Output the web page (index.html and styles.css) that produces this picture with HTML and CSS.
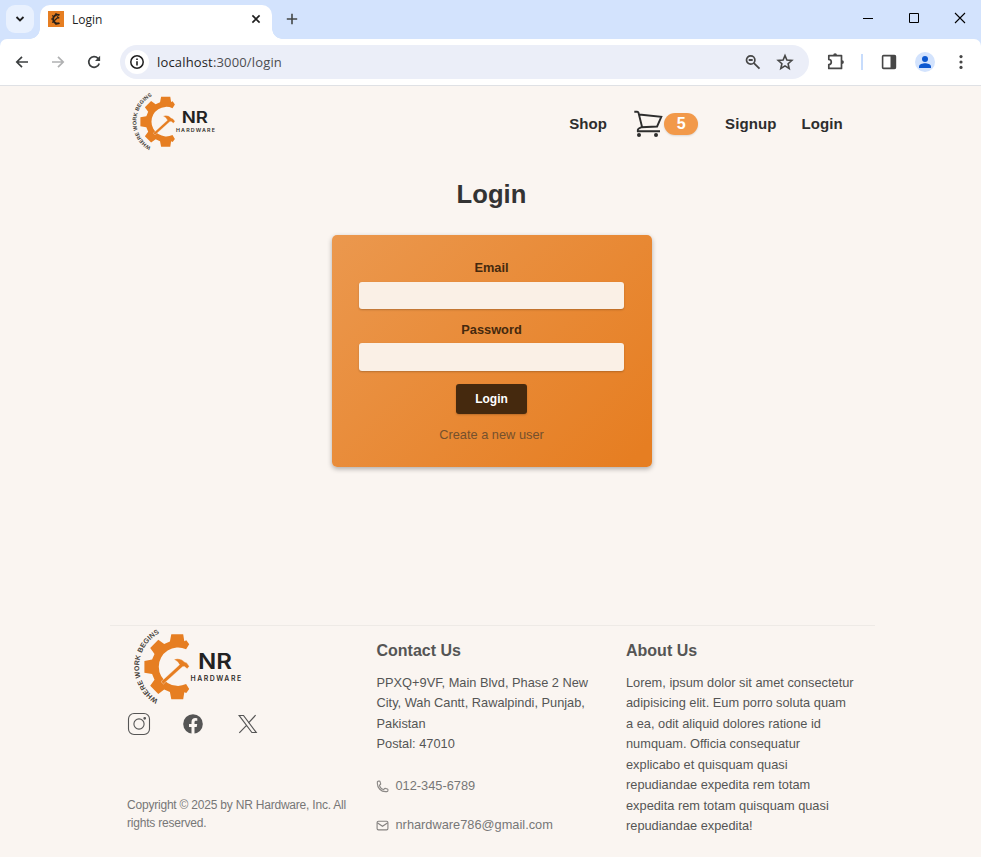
FILE: index.html
```html
<!DOCTYPE html>
<html lang="en">
<head>
<meta charset="utf-8">
<title>Login</title>
<link rel="stylesheet" href="styles.css">
</head>
<body>
<svg width="0" height="0" class="defs" aria-hidden="true">
  <defs>
    <path id="ring" d="M31.2 76.8A38 38 0 0 1 35 9"/>
    <symbol id="logo" viewBox="0 0 120 84">
      <path fill="#e67e22" d="M44.3 11.2h11.9l1.1 7 2-.9 2.900 4-3.100 5A19.200 19.200 0 1 0 59.100 61.100l3.100 5-2.900 3.900-2-.8-1.100 7h-11.900l-1.400-7.200-5.700-2.400-5.900 4.300-8.100-8.200 4.300-6-2.400-5.600-7.700-1.300V38l7.700-1.400 2.400-5.700-4.300-6 8.100-8.100 5.900 4.200 5.700-2.400z"/>
      <path fill="#e67e22" d="M34 58.700 52.500 41.800q-1.800-3.800-5.600-5.600 6.800-1.700 10.400 2.600l2.400 1 2.600 3.500-2.100 2.500-2.800-2.300-1.900.3-19.100 17.200z" stroke="#faf5f1" stroke-width=".4"/>
      <text class="ring-text"><textPath href="#ring" textLength="81" lengthAdjust="spacing">WHERE WORK BEGINS</textPath></text>
      <text class="mark" x="71" y="46" textLength="34" lengthAdjust="spacingAndGlyphs">NR</text>
      <text class="word" x="63.600" y="57.700" textLength="50.500" lengthAdjust="spacing">HARDWARE</text>
    </symbol>
  </defs>
</svg>

<div class="chrome">
<div class="tabstrip">
  <div class="tab-search"><svg width="28" height="28" viewBox="0 0 28 28"><path d="M10.500 12l3.500 3.500 3.500-3.500" fill="none" stroke="#1f1f1f" stroke-width="1.800"/></svg></div>
  <div class="tab">
    <svg class="favicon" width="16" height="16" viewBox="0 0 16 16"><path fill="#e67e22" d="M0 0h16v16H0z"/><path d="M11.500 4.200A4.400 4.400 0 1 0 11.500 12" fill="none" stroke="#2b2118" stroke-width="1.900"/><path d="M8 2v2M3 8h2M8 12v2M4.300 4.300l1 1M4.300 11.700l1-1M6 10l4-3.800M9 5.500l2.300 1.700" stroke="#2b2118" stroke-width="1.200"/></svg>
    <span class="tab-title">Login</span>
    <svg class="tab-close" width="16" height="16" viewBox="0 0 16 16"><path d="M4.400 4.400l7.200 7.200M11.600 4.400l-7.200 7.200" stroke="#1f1f1f" stroke-width="1.600"/></svg>
  </div>
  <svg class="new-tab" width="16" height="16" viewBox="0 0 16 16"><path d="M8 2.800v10.400M2.800 8h10.400" stroke="#444746" stroke-width="1.600"/></svg>
  <div class="window-controls">
    <svg width="46" height="36" viewBox="0 0 46 36"><path d="M18 18.500h10" stroke="#000"/></svg>
    <svg width="46" height="36" viewBox="0 0 46 36"><path d="M18.500 13.500h9v9h-9z" fill="none" stroke="#000"/></svg>
    <svg width="46" height="36" viewBox="0 0 46 36"><path d="M18 13l10 10M28 13L18 23" stroke="#000" stroke-width="1.100"/></svg>
  </div>
</div>

<div class="toolbar">
  <svg class="back" width="16" height="16" viewBox="0 0 16 16"><path d="M14 8H3M8 2.800L2.800 8 8 13.200" fill="none" stroke="#3c3f40" stroke-width="1.700"/></svg>
  <svg class="forward" width="16" height="16" viewBox="0 0 16 16"><path d="M2 8h11M8 2.800L13.200 8 8 13.200" fill="none" stroke="#b0b1b2" stroke-width="1.700"/></svg>
  <svg class="reload" width="16" height="16" viewBox="0 0 16 16"><path d="M13.200 9.400A5.300 5.300 0 1 1 12 4.400l1.300 1.500" fill="none" stroke="#3c3f40" stroke-width="1.700"/><path d="M14.100 1.800v5.100H9z" fill="#3c3f40"/></svg>
  <div class="omnibox">
    <span class="info"><svg width="16" height="16" viewBox="0 0 16 16"><circle cx="8" cy="8" r="6.200" fill="none" stroke="#1f1f1f" stroke-width="1.500"/><path d="M8 7.200v4.200M8 4.500v1.600" stroke="#1f1f1f" stroke-width="1.600"/></svg></span>
    <span class="url"><b>localhost</b>:3000/login</span>
    <svg class="zoom" width="18" height="18" viewBox="0 0 18 18"><circle cx="6.700" cy="7" r="4.200" fill="none" stroke="#474747" stroke-width="1.700"/><path d="M4.700 7h4M9.900 10.200l5.600 5.500" stroke="#474747" stroke-width="1.800"/></svg>
    <svg class="star" width="18" height="18" viewBox="0 0 18 18"><path d="M9 2.600l1.900 4.500 4.900.4-3.700 3.200 1.100 4.800L9 12.900l-4.200 2.600 1.100-4.800-3.700-3.200 4.900-.4z" fill="none" stroke="#474747" stroke-width="1.600"/></svg>
  </div>
  <svg class="ext" width="18" height="18" viewBox="0 0 18 18"><path d="M1.800 2.600h12.700v12.800H1.800v-3.900a2.500 2.500 0 0 0 0-5z" fill="none" stroke="#474747" stroke-width="1.700" stroke-linejoin="round"/><path d="M6.200 2.200a1.900 1.900 0 0 1 3.800 0zM15 7.200a1.900 1.900 0 0 1 0 3.800z" fill="#474747"/></svg>
  <i class="divider"></i>
  <svg class="panel" width="16" height="16" viewBox="0 0 16 16"><rect x="1.600" y="1.600" width="12.800" height="12.800" rx="1" fill="none" stroke="#474747" stroke-width="1.600"/><path d="M9.500 1.500h5v13h-5z" fill="#474747"/></svg>
  <svg class="profile" width="20" height="20" viewBox="0 0 20 20"><circle cx="10" cy="10" r="10" fill="#d3e3fd"/><circle cx="10" cy="7" r="3" fill="#0b57d0"/><path d="M4 16v-1.600c0-2.200 3.600-3.200 6-3.200s6 1 6 3.200V16z" fill="#0b57d0"/></svg>
  <svg class="more" width="16" height="16" viewBox="0 0 16 16"><g fill="#474747"><circle cx="8" cy="2.600" r="1.600"/><circle cx="8" cy="8" r="1.600"/><circle cx="8" cy="13.400" r="1.600"/></g></svg>
</div>
</div>

<div class="page">
  <header class="header">
    <svg class="logo-small"><use href="#logo"/></svg>
    <nav class="nav">
      <a class="shop">Shop</a>
      <a class="cart">
        <svg width="30" height="28" viewBox="0 0 30 28"><path d="M.3 1.800h2.900q1 0 1.300 1L8 16.800M5.100 4.500l22.200 2.400-4.200 9.600L7.300 17.200l-2.800 1.600q-1 .8-.7 2.400H26" fill="none" stroke="#2d2d2d" stroke-width="1.900"/><circle cx="5" cy="24.900" r="2" fill="#2d2d2d"/><circle cx="22" cy="24.900" r="2" fill="#2d2d2d"/></svg>
        <span class="badge">5</span>
      </a>
      <a class="signup">Signup</a>
      <a class="login-link">Login</a>
    </nav>
  </header>

  <main class="main">
    <h1>Login</h1>
    <form class="card">
      <label for="email">Email</label>
      <input id="email" type="email">
      <label for="password" class="second">Password</label>
      <input id="password" type="password">
      <button type="button">Login</button>
      <a class="create">Create a new user</a>
    </form>
  </main>

  <footer class="footer">
    <div class="brand">
      <svg class="logo-large"><use href="#logo"/></svg>
      <div class="social">
        <svg width="24" height="24" viewBox="0 0 24 24" fill="none" stroke="#555" stroke-width="1.100"><rect x="1.500" y="1.500" width="21" height="21" rx="5.500"/><circle cx="12" cy="12" r="5.100"/><circle cx="17.700" cy="6.300" r=".8" fill="#555"/></svg>
        <svg width="20" height="20" viewBox="0 0 20 20"><circle cx="10" cy="10" r="9.800" fill="#555"/><path d="M8.500 20v-7H6v-2.900h2.500V7.900c0-2.500 1.500-3.900 3.800-3.900l2 .2v2.500h-1.200c-1.200 0-1.600.7-1.600 1.500v1.900h2.700l-.5 2.900h-2.200v7z" fill="#faf5f1"/></svg>
        <svg width="20" height="20" viewBox="0 0 20 20" fill="none" stroke="#555" stroke-width="1.200"><path d="M1.200 1.500h4.300l12.700 17h-4.300zM17.600 1.200l-7.300 8M8.800 11.200L1.300 18.800"/></svg>
      </div>
      <p class="copyright">Copyright © 2025 by NR Hardware, Inc. All rights reserved.</p>
    </div>
    <div class="contact">
      <h2>Contact Us</h2>
      <p>PPXQ+9VF, Main Blvd, Phase 2 New<br>City, Wah Cantt, Rawalpindi, Punjab,<br>Pakistan<br>Postal: 47010</p>
      <a class="phone"><svg width="13" height="13" viewBox="0 0 24 24"><path d="M2.500 6.500C2.500 14.800 9.200 21.500 17.500 21.500H20a2 2 0 0 0 2-2v-1.800c0-.6-.4-1-.9-1.200l-4.200-1.100c-.5-.1-1 .1-1.300.5l-1 1.300c-.3.4-.8.5-1.200.4a12 12 0 0 1-7-7c-.2-.5 0-1 .4-1.300l1.300-1c.4-.3.6-.8.5-1.300L7.500 2.900c-.1-.5-.6-.9-1.200-.9H4.500a2 2 0 0 0-2 2z" fill="none" stroke="#8c8987" stroke-width="2.100"/></svg><span>012-345-6789</span></a>
      <a class="mail"><svg width="13" height="13" viewBox="0 0 24 24"><rect x="2" y="4" width="20" height="16" rx="2.500" fill="none" stroke="#858280" stroke-width="2"/><path d="M2.300 7L12 13.500 21.700 7" fill="none" stroke="#858280" stroke-width="2"/></svg><span>nrhardware786@gmail.com</span></a>
    </div>
    <div class="about">
      <h2>About Us</h2>
      <p>Lorem, ipsum dolor sit amet consectetur<br>adipisicing elit. Eum porro soluta quam<br>a ea, odit aliquid dolores ratione id<br>numquam. Officia consequatur<br>explicabo et quisquam quasi<br>repudiandae expedita rem totam<br>expedita rem totam quisquam quasi<br>repudiandae expedita!</p>
    </div>
  </footer>
</div>
</body>
</html>
```
FILE: styles.css
```css
* { box-sizing: border-box; }
html, body { margin: 0; height: 857px; overflow: hidden; }
body { background: #faf5f1; font-family: "Liberation Sans", Arial, sans-serif; color: #555; }
svg { display: block; flex: none; }
h1, h2, p { margin: 0; }
.defs { position: absolute; }

/* Browser frame */
.chrome { background: #d3e3fd; }
.tabstrip { height: 39px; display: flex; align-items: flex-start; font-family: "Open Sans", "Noto Sans", sans-serif; }
.tab-search { width: 28px; height: 28px; margin: 5px 6px 0; border-radius: 9px; background: #e9f1fe; }
.tab { position: relative; width: 232px; height: 34px; margin-top: 5px; padding: 6px 8px; display: flex; background: #fff; border-radius: 10px 10px 0 0; }
.tab::before, .tab::after { content: ""; position: absolute; bottom: 0; width: 10px; height: 10px; }
.tab::before { left: -10px; background: radial-gradient(circle at 0 0, transparent 9.5px, #fff 10px); }
.tab::after { right: -10px; background: radial-gradient(circle at 100% 0, transparent 9.5px, #fff 10px); }
.tab-title { margin-left: 8px; font-size: 12px; line-height: 18px; color: #1f1f1f; flex: 1; }
.new-tab { margin: 11px 0 0 12px; }
.window-controls { display: flex; margin-left: auto; margin-right: -2px; }
.toolbar { height: 47px; border-bottom: 1px solid #dfe1e5; background: #fff; border-radius: 7px 7px 0 0; display: flex; align-items: center; padding: 0 12px 0 14px; }
.forward { margin-left: 20px; }
.reload { margin-left: 20px; }
.omnibox { width: 689px; height: 34px; margin-left: 18px; padding: 0 15px 0 5px; display: flex; align-items: center; background: #ebeef8; border-radius: 17px; }
.info { width: 24px; height: 24px; padding: 4px; background: #fff; border-radius: 50%; }
.url { flex: 1; margin-left: 8px; font-family: "Open Sans", sans-serif; font-size: 13px; letter-spacing: .16px; color: #4c4d50; line-height: 20px; }
.url b { font-weight: 400; color: #1f1f1f; }
.star { margin-left: 14px; }
.ext { margin-left: 18px; }
.divider { width: 2px; height: 16px; margin-left: 16px; background: #c7dcfc; }
.panel { margin-left: 18px; }
.profile { margin-left: 18px; }
.more { margin-left: 18px; }

/* Page */
.page { width: 765px; margin-left: 110px; height: 771px; display: flex; flex-direction: column; }
.header { height: 76px; padding-left: 16.8px; display: flex; align-items: flex-start; }
.logo-small { width: 92.4px; height: 64.7px; margin-top: 2.2px; }
.nav { flex: 1; height: 76px; padding-left: 350px; display: flex; align-items: center; color: #2d2d2d; font-weight: 700; font-size: 15px; line-height: 17px; letter-spacing: .1px; }
.nav > a:not(.cart) { margin-top: -1px; }
.cart { display: flex; align-items: center; width: 64px; margin-left: 27px; }
.badge { width: 34px; height: 22px; border-radius: 11px; background: #f2994a; color: #fff; text-align: center; line-height: 22px; font-size: 16px; letter-spacing: 0; box-shadow: 0 1px 2px rgba(0,0,0,.12); }
.signup { margin-left: 27px; }
.login-link { margin-left: 25px; }
.main { height: 463px; width: 763px; display: flex; flex-direction: column; align-items: center; }
h1 { margin-top: 14px; height: 36px; line-height: 36px; font-size: 25.6px; letter-spacing: .1px; color: #333; }
.card { width: 320px; height: 232px; margin-top: 23px; padding: 24px 27px 20px; display: block; text-align: center; border-radius: 5px; background: linear-gradient(135deg, #eb984e, #e67e22 95%); box-shadow: 0 2px 5px rgba(0,0,0,.3); font-size: 12.8px; color: #45290e; }
.card label { display: block; font-weight: 700; line-height: 18px; }
.card .second { margin-top: 12px; }
.card input { display: block; width: 265px; height: 27px; margin: 5px 0 0; padding: 0; border: 0; border-radius: 3px; background: #faf0e6; box-shadow: 0 1px 2px rgba(0,0,0,.22); }
.card .second + input { height: 28px; margin-top: 4px; }
.card button { display: block; width: 71px; height: 30px; margin: 13px auto 0; padding: 0; border: 0; border-radius: 3px; background: #45290e; color: #fff; font: 700 12px "Liberation Sans", Arial, sans-serif; box-shadow: 0 1px 2px rgba(0,0,0,.2); }
.create { display: block; margin-top: 12px; line-height: 18px; color: #75502c; }
.footer { border-top: 1px solid #eeeae6; height: 232px; padding: 0 17px; display: grid; grid-template-columns: 249.5px 249.5px 232px; }
.logo-large { width: 120px; height: 84px; margin-top: -3px; }
.social { display: flex; align-items: center; margin-top: 5px; height: 24px; }
.social svg:nth-child(2) { margin-left: 32px; }
.social svg:nth-child(3) { margin-left: 35px; }
.copyright { margin-top: 60px; width: 232px; font-size: 12px; letter-spacing: -.21px; line-height: 18px; color: #777; }
.footer h2 { margin: 15px 0 12px; font-size: 16px; line-height: 20px; }
.footer .contact p, .about p { font-size: 12.8px; line-height: 20.48px; white-space: nowrap; }
.phone, .mail { display: flex; align-items: center; height: 18px; color: #777; font-size: 12.8px; }
.phone { margin-top: 22px; }
.mail { margin-top: 21px; }
.phone svg, .mail svg { margin: 2px 0 0 -1px; }
.phone span, .mail span { margin-left: 7px; }

/* Logo lettering */
.ring-text { font: 700 7px "Liberation Sans", sans-serif; fill: #45413a; }
.mark { font: 600 21.5px Inter, sans-serif; fill: #222; }
.word { font: 600 6.9px Inter, sans-serif; fill: #302e2b; }
```
